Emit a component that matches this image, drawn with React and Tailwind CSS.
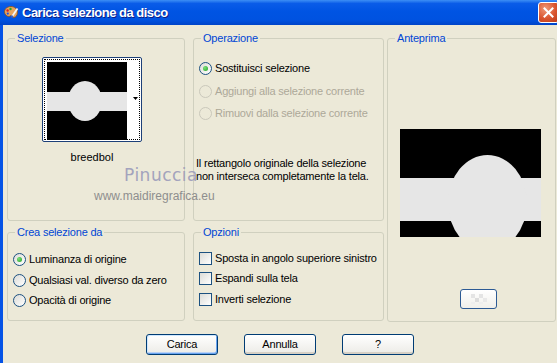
import React from "react";

function Radio({ checked, disabled }) {
  return (
    <span
      className={
        disabled
          ? "flex w-[13px] h-[13px] shrink-0 items-center justify-center rounded-full border border-[#cac8bb] bg-[#ece9d8]"
          : "flex w-[13px] h-[13px] shrink-0 items-center justify-center rounded-full border border-[#1c5180] bg-gradient-to-br from-[#dcdcd7] to-white"
      }
    >
      {checked && (
        <span className="w-[5px] h-[5px] rounded-full bg-[radial-gradient(circle_at_35%_35%,#7be07a,#21a121)]" />
      )}
    </span>
  );
}

function Check() {
  return (
    <span className="block w-[13px] h-[13px] shrink-0 border border-[#1c5180] bg-gradient-to-br from-[#dcdcd7] to-white" />
  );
}

function Group({ legend, className, children }) {
  return (
    <div className={"relative border border-[#d0d0bf] rounded-[3px] " + className}>
      <span className="absolute left-[7px] -top-[7px] px-[2px] bg-[#ece9d8] text-[#0046d5] leading-[13px] whitespace-nowrap">
        {legend}
      </span>
      {children}
    </div>
  );
}

function XPButton({ children, def }) {
  return (
    <button
      className={
        def
          ? "w-[72px] h-[21px] rounded-[3px] border border-[#003c74] bg-gradient-to-b from-white to-[#ecebe6] shadow-[inset_1px_1px_0_#cee7ff,inset_-1px_-1px_0_#69a4f0,inset_0_-2px_0_#b9d1f5] text-black leading-[13px]"
          : "w-[72px] h-[21px] rounded-[3px] border border-[#003c74] bg-gradient-to-b from-white to-[#ecebe6] shadow-[inset_0_-2px_0_#d6d0c5] text-black leading-[13px]"
      }
    >
      {children}
    </button>
  );
}

function PaletteIcon() {
  return (
    <svg width="16" height="16" viewBox="0 0 16 16">
      <path
        d="M8 2.5c-3.6 0-6.5 2.3-6.5 5.3 0 2.6 2.2 4.7 4.4 4.7 1.2 0 1.3-1 2.1-1 1 0 1.2 2 2.8 2 2.2 0 3.7-2.5 3.7-5.2C14.5 5 11.7 2.5 8 2.5z"
        fill="#e6a45e"
        stroke="#8a4f1c"
        strokeWidth="0.8"
      />
      <circle cx="4.6" cy="6.5" r="1.2" fill="#e02020" />
      <circle cx="7.5" cy="5" r="1.2" fill="#2aa82a" />
      <circle cx="4.8" cy="9.6" r="1.1" fill="#2050e0" />
      <path d="M9 12.5 L14.5 4.5" stroke="#f4f4f4" strokeWidth="1.8" />
      <path d="M8.4 13.5 L9.6 11.6" stroke="#4060c0" strokeWidth="2" />
    </svg>
  );
}

export default function App() {
  return (
    <div className="relative w-[557px] h-[363px] overflow-hidden bg-[#ece9d8] font-['Liberation_Sans',Arial,sans-serif] text-[11px] tracking-[-0.2px] text-black">
      {/* Title bar */}
      <div className="flex h-[25px] items-center bg-[linear-gradient(to_bottom,#3d8ff5_0%,#0a5ce8_14%,#0054e3_45%,#0052e0_80%,#0044c8_100%)]">
        <div className="ml-[3px] mt-[-1px]">
          <PaletteIcon />
        </div>
        <span className="ml-[3px] font-bold text-[13px] tracking-[-0.5px] text-white [text-shadow:1px_1px_0_#0a1e88]">
          Carica selezione da disco
        </span>
        <div className="flex-1" />
        <div className="mr-[-2px] flex h-[21px] w-[21px] items-center justify-center rounded-[3px] border border-white bg-[radial-gradient(circle_at_35%_30%,#f09a78,#d9542e_55%,#b83a18)]">
          <svg width="11" height="11" viewBox="0 0 11 11">
            <path d="M1.5 1.5 L9.5 9.5 M9.5 1.5 L1.5 9.5" stroke="white" strokeWidth="2" strokeLinecap="square" />
          </svg>
        </div>
      </div>

      {/* Body */}
      <div className="flex h-[338px]">
        <div className="w-[3px] bg-[#0553e6]" />
        <div className="flex flex-1 flex-col pl-[4px] pt-[13px]">
          <div className="flex">
            {/* Left column */}
            <div className="flex w-[178px] flex-col">
              <Group legend="Selezione" className="h-[183px]">
                <div className="ml-[34px] mt-[18px] flex w-[100px] flex-col items-center">
                  <div className="h-[85px] w-[100px] rounded-[2px] border border-[#1c3f77] bg-white p-[1px]">
                    <div className="flex h-full w-full border border-dotted border-black pl-[2px] pt-[2px]">
                      <svg width="80" height="78" viewBox="0 0 80 78" className="block shrink-0">
                        <rect width="80" height="78" fill="#000" />
                        <rect y="30" width="80" height="19" fill="#e6e6e6" />
                        <ellipse cx="38" cy="39" rx="17" ry="20" fill="#e6e6e6" />
                      </svg>
                      <div className="flex flex-1 items-center justify-end pb-[4px] pr-[1px]">
                        <svg width="5" height="3" viewBox="0 0 5 3">
                          <path d="M0 0 H5 L2.5 3 Z" fill="#000" />
                        </svg>
                      </div>
                    </div>
                  </div>
                  <div className="mt-[9px] leading-[13px] tracking-normal">breedbol</div>
                </div>
              </Group>
              <Group legend="Crea selezione da" className="mt-[11px] h-[89px]">
                <div className="ml-[5px] mt-[16px] flex flex-col">
                  <div className="flex h-[21px] items-center gap-[3px]">
                    <Radio checked />
                    <span>Luminanza di origine</span>
                  </div>
                  <div className="flex h-[20px] items-center gap-[3px]">
                    <Radio />
                    <span>Qualsiasi val. diverso da zero</span>
                  </div>
                  <div className="flex h-[20px] items-center gap-[3px]">
                    <Radio />
                    <span>Opacità di origine</span>
                  </div>
                </div>
              </Group>
            </div>

            {/* Middle column */}
            <div className="ml-[8px] flex w-[191px] flex-col">
              <Group legend="Operazione" className="h-[183px]">
                <div className="ml-[5px] mt-[17px] flex flex-col">
                  <div className="flex h-[24px] items-center gap-[3px]">
                    <Radio checked />
                    <span>Sostituisci selezione</span>
                  </div>
                  <div className="flex h-[23px] items-center gap-[3px] text-[#aca899]">
                    <Radio disabled />
                    <span>Aggiungi alla selezione corrente</span>
                  </div>
                  <div className="flex h-[21px] items-center gap-[3px] text-[#aca899]">
                    <Radio disabled />
                    <span>Rimuovi dalla selezione corrente</span>
                  </div>
                </div>
                <div className="ml-[2px] mt-[33px] leading-[13px]">
                  Il rettangolo originale della selezione
                  <br />
                  non interseca completamente la tela.
                </div>
              </Group>
              <Group legend="Opzioni" className="mt-[11px] h-[89px]">
                <div className="ml-[5px] mt-[15px] flex flex-col">
                  <div className="flex h-[20px] items-center gap-[3px]">
                    <Check />
                    <span>Sposta in angolo superiore sinistro</span>
                  </div>
                  <div className="flex h-[21px] items-center gap-[3px]">
                    <Check />
                    <span>Espandi sulla tela</span>
                  </div>
                  <div className="flex h-[20px] items-center gap-[3px]">
                    <Check />
                    <span>Inverti selezione</span>
                  </div>
                </div>
              </Group>
            </div>

            {/* Right column */}
            <Group legend="Anteprima" className="ml-[3px] h-[284px] w-[169px]">
              <div className="ml-[12px] mt-[90px]">
                <svg width="141" height="108" viewBox="0 0 141 108" className="block">
                  <rect width="141" height="108" fill="#000" />
                  <rect y="49" width="141" height="43" fill="#e6e6e6" />
                  <ellipse cx="87.5" cy="74" rx="39.5" ry="48" fill="#e6e6e6" />
                </svg>
              </div>
              <div className="ml-[72px] mt-[52px] flex h-[20px] w-[37px] items-center justify-center rounded-[3px] border border-[#2c5a94] bg-gradient-to-b from-white to-[#f0efea]">
                <svg width="16" height="10" viewBox="0 0 16 10">
                  <rect x="0" y="0" width="4" height="4" fill="#e4e4e4" />
                  <rect x="8" y="0" width="4" height="4" fill="#e4e4e4" />
                  <rect x="4" y="4" width="4" height="4" fill="#dcdcdc" />
                  <rect x="12" y="4" width="4" height="4" fill="#e8e8e8" />
                  <rect x="0" y="8" width="4" height="2" fill="#eeeeee" />
                  <rect x="8" y="8" width="4" height="2" fill="#eeeeee" />
                </svg>
              </div>
            </Group>
          </div>

          {/* Buttons */}
          <div className="ml-[139px] mt-[12px] flex gap-[26px]">
            <XPButton def>Carica</XPButton>
            <XPButton>Annulla</XPButton>
            <XPButton>?</XPButton>
          </div>
        </div>
      </div>

      {/* Watermark */}
      <div className="pointer-events-none absolute left-[124px] top-[165px] font-['DejaVu_Sans',sans-serif] text-[17px] leading-[20px] tracking-[0.5px] text-[#a3a3bd]">
        Pinuccia
      </div>
      <div className="pointer-events-none absolute left-[94px] top-[189px] text-[12px] leading-[14px] tracking-normal text-[#8e8e8e]">
        www.maidiregrafica.eu
      </div>
    </div>
  );
}
